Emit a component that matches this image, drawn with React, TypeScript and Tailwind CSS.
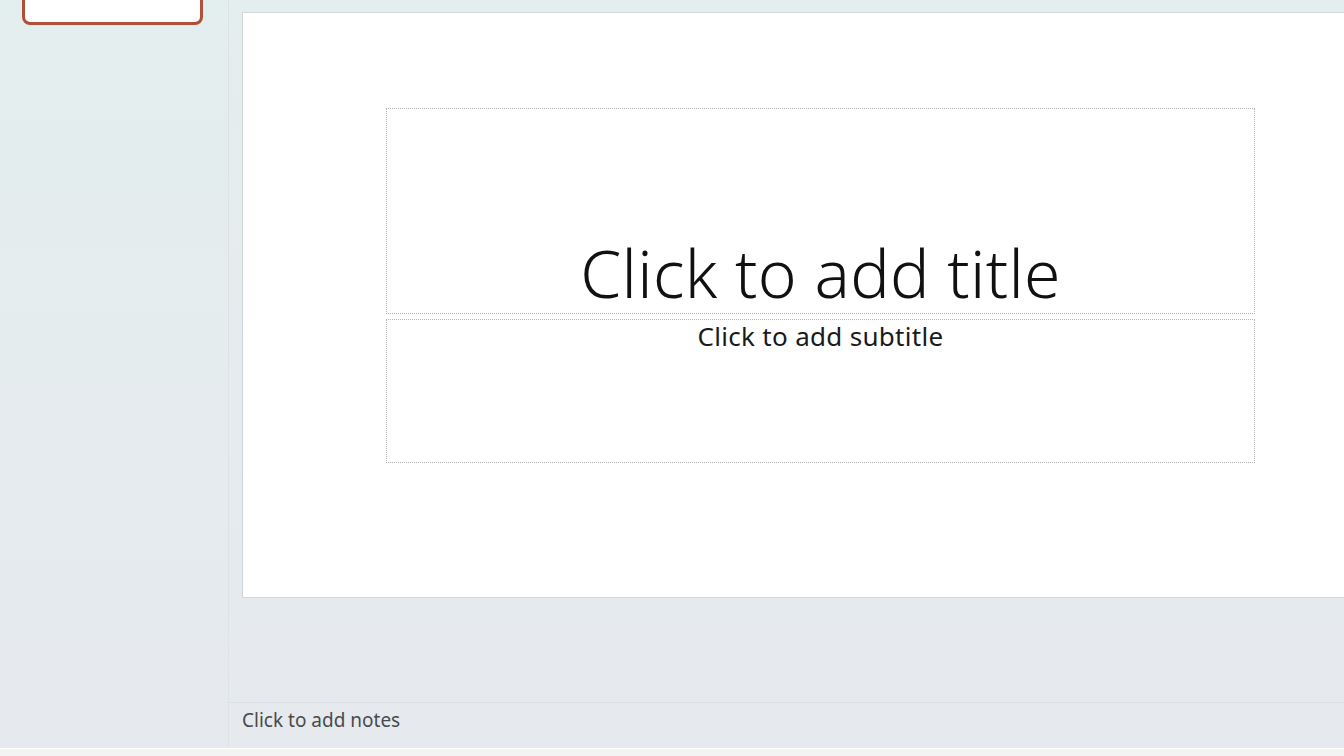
export default function App() {
  return (
    <div className="flex h-[756px] w-[1344px] flex-col overflow-hidden font-['Noto_Sans',sans-serif]">
      <div className="flex min-h-0 flex-1">
        {/* thumbnails pane */}
        <aside className="w-[229px] shrink-0 border-r border-[#dde3e5] bg-gradient-to-b from-[#e3eeee] via-[#e5ecee] to-[#e6e9ee] pl-[22px]">
          <div className="-mt-[10px] h-[35px] w-[181px] rounded-b-[8px] border-[3px] border-[#b14f38] bg-white" />
        </aside>

        {/* editing area */}
        <main className="flex min-w-0 flex-1 flex-col bg-gradient-to-b from-[#e4eeee] to-[#e6e9ee]">
          <div className="flex-1 pl-[13px] pt-[12px]">
            <div className="h-[586px] w-[1160px] border border-[#d2d6da] bg-white pl-[143px] pt-[95px]">
              <div className="flex h-[206px] w-[869px] items-end justify-center border border-dotted border-[#b4b4b4] pb-[8px]">
                <span className="text-[66px] font-light leading-none tracking-[0.3px] text-[#111]">
                  Click to add title
                </span>
              </div>
              <div className="mt-[5px] flex h-[144px] w-[869px] justify-center border border-dotted border-[#b4b4b4]">
                <span className="text-[26px] leading-[32px] tracking-[0.3px] text-[#1a1a1a]">
                  Click to add subtitle
                </span>
              </div>
            </div>
          </div>
          <div className="h-[46px] border-t border-[#dbe0e3] pl-[13px] pt-[4px]">
            <span className="text-[19px] leading-[26px] text-[#4a4a4a]">Click to add notes</span>
          </div>
        </main>
      </div>
      <div className="h-[8px] border-t border-white bg-[#f3f3f3]" />
    </div>
  );
}
